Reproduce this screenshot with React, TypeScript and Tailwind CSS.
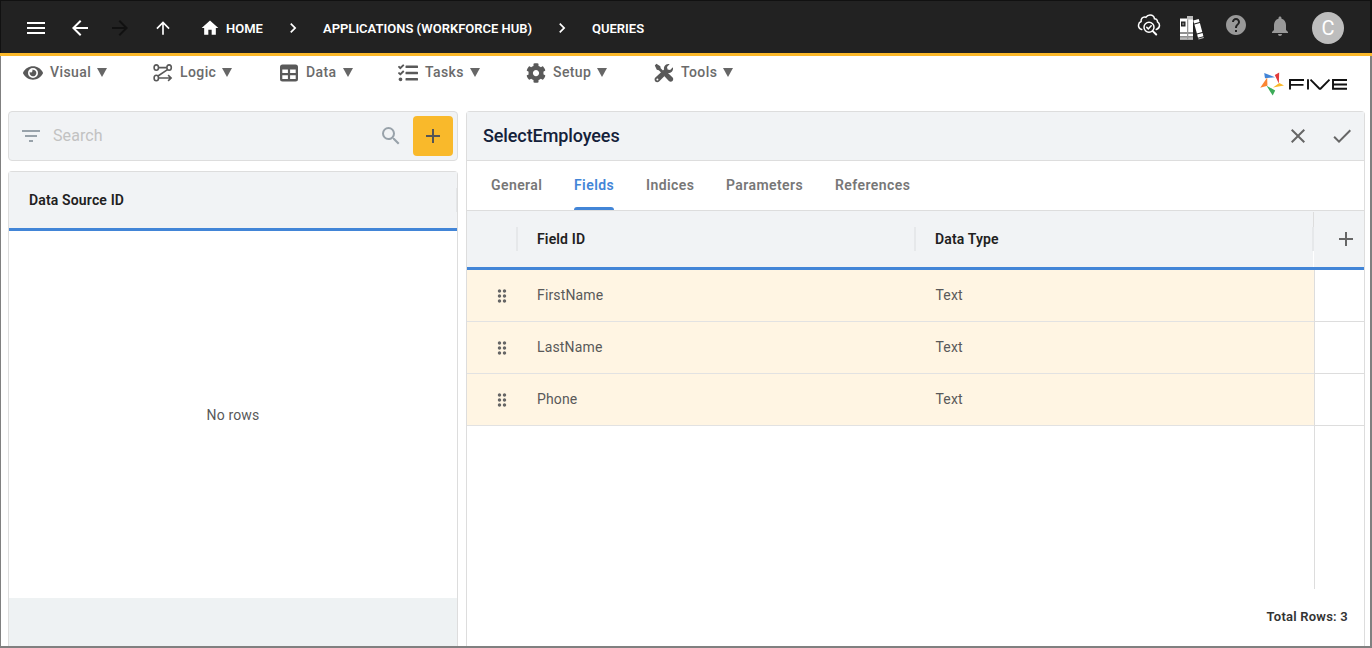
import type { ReactNode } from 'react'
import {
  MdAdd,
  MdArrowBack,
  MdArrowForward,
  MdArrowUpward,
  MdCheck,
  MdChevronRight,
  MdClose,
  MdDragIndicator,
  MdFilterList,
  MdHelp,
  MdHome,
  MdMenu,
  MdNotifications,
  MdSearch,
} from 'react-icons/md'
import { FaCog, FaEye, FaTasks } from 'react-icons/fa'

const fields = [
  { id: 'FirstName', type: 'Text' },
  { id: 'LastName', type: 'Text' },
  { id: 'Phone', type: 'Text' },
]

const tabs = [
  { label: 'General', width: 'w-[51px]' },
  { label: 'Fields', width: 'w-[40px]', active: true },
  { label: 'Indices', width: 'w-[48px]' },
  { label: 'Parameters', width: 'w-[77px]' },
  { label: 'References', width: 'w-[75px]' },
]

function LogicIcon() {
  return (
    <svg viewBox="0 0 20 20" className="h-5 w-5" fill="none" stroke="currentColor" strokeWidth="1.6">
      <ellipse cx="3.3" cy="4.6" rx="2.2" ry="2.7" />
      <ellipse cx="16.1" cy="4.6" rx="2.2" ry="2.7" />
      <ellipse cx="3.3" cy="15" rx="2.2" ry="2.7" />
      <path d="M5.5 4.6h8.400M14.500 6.700L5 13M5.500 15h12.500M15.100 12.100l3 2.900-3 2.900" />
    </svg>
  )
}

function TableIcon() {
  return (
    <svg viewBox="0 0 20 20" className="h-5 w-5" fill="currentColor">
      <path
        fillRule="evenodd"
        d="M3.500 1.500h13a2.500 2.500 0 0 1 2.500 2.500v12a2.500 2.500 0 0 1-2.500 2.500h-13A2.500 2.500 0 0 1 1 16V4a2.500 2.500 0 0 1 2.500-2.500zM3.300 6.400v3.700h5.600V6.400zM11.100 6.400v3.700h5.600V6.400zM3.300 12.300v3.700h5.600v-3.700zM11.100 12.300v3.700h5.600v-3.700z"
      />
    </svg>
  )
}

function ToolsIcon() {
  return (
    <svg viewBox="0 0 20 20" className="h-5 w-5" fill="currentColor">
      <path d="M.8 2.5L2.400.8l3.900 2.500.4 2 3 3-1.900 1.900-3-3-2-.4z" />
      <path d="M11.200 10.700l2-1.500 5.200 5.100c1 1 1.100 2.600.1 3.600s-2.600 1-3.600 0L10.200 13z" />
      <path
        fillRule="evenodd"
        d="M18.900 4.300l-2.800 2.700-2.500-.5-.6-2.500L15.700 1.100c-1.900-.6-4 0-5.100 1.800-.7 1.100-.9 2.300-.6 3.500L1.400 14.600c-1.100 1-1.100 2.700-.1 3.800s2.800 1.100 3.800 0l8.400-8.500c1.500.4 3.100-.1 4.300-1.200 1.200-1.200 1.500-2.900 1.100-4.400zM3.400 17.400a1 1 0 1 1 0-2 1 1 0 0 1 0 2z"
      />
    </svg>
  )
}

function CloudSearchIcon() {
  return (
    <svg viewBox="0 0 24 24" className="h-6 w-6" fill="none" stroke="currentColor" strokeWidth="1.5" strokeLinecap="round">
      <path d="M4.700 16.500C2.700 15.900 1.300 14.200 1.500 12c.2-1.700 1.100-2.900 2.600-3.500C3.800 5.900 5.400 4 7.600 4c.5 0 .9 0 1.400.2C9.900 2.700 11.200 1.900 13 1.900c2.500 0 4.200 1.500 4.500 3.900 2 0 3.100 1.400 3 3.100 1.400.8 2 2 2 3.400 0 2.100-1.200 3.600-3.200 4.200" />
      <circle cx="12" cy="14.300" r="5" />
      <path d="M9.800 14.400l1.500 1.500 2.900-3.200" />
      <path d="M15.800 18.100l3.400 3.400" strokeWidth="2" />
    </svg>
  )
}

function BooksIcon() {
  return (
    <svg viewBox="0 0 26 26" className="h-[26px] w-[26px]" fill="#fff">
      <path d="M1 4.500h7v14H1zM1 19.500h7v3H1zM1 23.500h7v2H1z" />
      <path d="M8 2h6v16.500H8zM8 19.500h6v3H8zM8 23.500h6v2H8z" />
      <path fill="#bbb" d="M8 2h6v3.500H8zM1 23.500h7v2H1zM8 23.500h6v2H8z" />
      <path fill="#999" d="M8 5.500h1.300v20H8z" />
      <path fill="#222" d="M2 7.500h4.500v5H2z" />
      <path fill="#777" d="M3.200 8.800h2v2.400h-2z" />
      <path d="M14.200 6.600l5.500-1.500.9 3-5.500 1.500zM15.400 10.500l5.500-1.500 2.400 9-5.400 1.500zM18.100 20.500l5.500-1.500.8 3.200-5.400 1.500z" />
      <path fill="#bbb" d="M19.200 24.500l5.400-1.500.3 1.100-5.400 1.500z" />
    </svg>
  )
}

function FiveLogo() {
  return (
    <svg viewBox="0 0 90 26" className="h-[26px] w-[90px]">
      <path fill="#4285d7" d="M5.200 2l10.800 4.200-10 1z" />
      <path fill="#e23b3b" d="M20.200 1.600l-.4 11-4-8.600z" />
      <path fill="#fb8530" d="M8.200 6.600l.2 8.200-7.200 2z" />
      <path fill="#fbb829" d="M20.300 12l4.700 2.400-11 2.200z" />
      <path fill="#3cab58" d="M7.600 14.800l8.600 4.600-2.500 5.200z" />
      <path
        fill="none"
        stroke="#111"
        strokeWidth="1.9"
        d="M45 9H31v9.500M31 13.900h13.500M49 8.200v10.300M51.500 8.600l9 9.100h1l9-9.100M88 9H74v8.700h14M74 13.500h14"
      />
    </svg>
  )
}

function MenuItem({ icon, label, className }: { icon: ReactNode; label: string; className: string }) {
  return (
    <div className={`flex h-8 items-center text-[#595959] ${className}`}>
      <span className="mt-0.5 flex w-[27px] shrink-0 items-center">{icon}</span>
      <span className="text-sm font-medium tracking-[0.4px] text-[#6b6b6b]">{label}</span>
      <svg viewBox="0 0 10 9" className="ml-1.5 h-[9px] w-[10px] shrink-0" fill="#666">
        <path d="M0 0h10L5 9z" />
      </svg>
    </div>
  )
}

function Header() {
  return (
    <header className="-mr-0.5 -ml-px flex h-14 shrink-0 items-center border-b-[3px] border-[#fbb829] bg-[#222] pr-7 pl-6 text-[13px] font-semibold text-white shadow-[inset_0_1px_0_#111,inset_1px_0_0_#111,inset_-2px_0_0_#111]">
      <MdMenu className="mt-0.5 h-6 w-6" />
      <MdArrowBack className="mt-0.5 ml-5 h-6 w-6" />
      <MdArrowForward className="mt-0.5 ml-4 h-6 w-6 text-[#111]" />
      <MdArrowUpward className="mt-0.5 ml-[21px] h-5 w-5" />
      <MdHome className="mt-0.5 ml-[27px] h-5 w-5" />
      <span className="mt-1 ml-1.5 w-[57px]">HOME</span>
      <MdChevronRight className="mt-0.5 h-5 w-5" />
      <span className="mt-1 ml-5 w-[229px]">APPLICATIONS (WORKFORCE HUB)</span>
      <MdChevronRight className="mt-0.5 h-5 w-5" />
      <span className="mt-1 ml-5">QUERIES</span>
      <div className="ml-auto flex items-center">
        <span className="-mt-[3px]">
          <CloudSearchIcon />
        </span>
        <span className="ml-[18px]">
          <BooksIcon />
        </span>
        <MdHelp className="-mt-[3px] ml-[19px] h-6 w-6 text-[#999]" />
        <MdNotifications className="-mt-0.5 ml-5 h-6 w-6 text-[#999]" />
        <span className="mt-[3px] ml-5 flex h-8 w-8 items-center justify-center rounded-full bg-[#bdbdbd] text-xl font-normal">C</span>
      </div>
    </header>
  )
}

function MenuBar() {
  return (
    <nav className="flex h-[55px] shrink-0 items-start pl-[22px]">
      <MenuItem className="w-[130px]" label="Visual" icon={<FaEye className="h-5 w-5" />} />
      <MenuItem className="w-[126px]" label="Logic" icon={<LogicIcon />} />
      <MenuItem className="w-[119px]" label="Data" icon={<TableIcon />} />
      <MenuItem className="w-[128px]" label="Tasks" icon={<FaTasks className="h-5 w-5" />} />
      <MenuItem className="w-[128px]" label="Setup" icon={<FaCog className="h-5 w-5" />} />
      <MenuItem className="w-[128px]" label="Tools" icon={<ToolsIcon />} />
      <div className="mt-[15px] mr-[21px] ml-auto">
        <FiveLogo />
      </div>
    </nav>
  )
}

function Sidebar() {
  return (
    <aside className="flex w-[450px] flex-col">
      <div className="flex h-[50px] shrink-0 items-center rounded border border-[#ddd] bg-[#f1f3f5] pr-1 pl-[10px]">
        <MdFilterList className="h-6 w-6 text-[#98a2aa]" />
        <span className="ml-[10px] text-base tracking-[0.1px] text-[#c2c2c2]">Search</span>
        <MdSearch className="mr-[10px] ml-auto h-6 w-6 text-[#98a2aa]" />
        <button className="flex h-10 w-10 items-center justify-center rounded bg-[#f9b92b] text-[#555]">
          <MdAdd className="h-6 w-6" />
        </button>
      </div>
      <div className="mt-[10px] flex flex-1 flex-col rounded-t border border-b-0 border-[#ddd]">
        <div className="flex h-[59px] shrink-0 items-center justify-between border-b-[3px] border-[#4285d7] bg-[#f1f3f5] pl-5 text-sm font-semibold tracking-[0.15px] text-[#212121]">
          Data Source ID
          <span className="h-6 w-px bg-[#e4e6e8]" />
        </div>
        <div className="flex flex-1 items-center justify-center text-sm tracking-[0.15px] text-[#595959]">No rows</div>
        <div className="h-12 shrink-0 bg-[#eef2f3]" />
      </div>
    </aside>
  )
}

function FieldsTable() {
  return (
    <div className="flex flex-1 flex-col">
      <div className="flex h-[59px] shrink-0 border-b-[3px] border-[#4285d7] bg-[#f1f3f5] text-sm font-semibold tracking-[0.15px] text-[#212121]">
        <div className="flex w-[51px] items-center justify-end">
          <span className="h-6 w-0.5 bg-[#e6e8ea]" />
        </div>
        <div className="flex w-[398px] items-center justify-between pl-[19px]">
          Field ID
          <span className="h-6 w-0.5 bg-[#e6e8ea]" />
        </div>
        <div className="flex w-[396px] items-center pl-[19px]">Data Type</div>
        <div className="flex w-0.5 flex-col items-end">
          <span className="mt-px h-[15px] w-px bg-[#ddd]" />
          <span className="h-6 w-0.5 bg-[#e6e8ea]" />
          <span className="w-px flex-1 bg-white" />
        </div>
        <div className="flex flex-1 items-center justify-end pr-[6px] text-[#666]">
          <MdAdd className="h-6 w-6" />
        </div>
      </div>
      <div className="flex h-[319px] shrink-0 flex-col">
        {fields.map((field) => (
          <div key={field.id} className="flex h-[52px] text-sm tracking-[0.15px] text-[#595959]">
            <div className="flex w-[847px] items-center border-b border-[#e2e2e2] bg-[#fff5e3]">
              <MdDragIndicator className="mt-px ml-[25px] h-5 w-5 text-[#666]" />
              <span className="-mt-px ml-[25px] w-[398.5px]">{field.id}</span>
              <span className="-mt-px">{field.type}</span>
            </div>
            <div className="flex-1 border-b border-l border-[#ddd]" />
          </div>
        ))}
        <div className="ml-[847px] flex-1 border-l border-[#ddd]" />
      </div>
      <div className="mt-[18px] pr-4 text-right text-[13px] font-semibold tracking-[0.23px] text-[#333]">Total Rows: 3</div>
    </div>
  )
}

function QueryPanel() {
  return (
    <section className="ml-2 flex w-[899px] flex-col rounded-t border border-b-0 border-[#ddd]">
      <div className="flex h-[49px] shrink-0 items-center border-b border-[#ddd] bg-[#f1f3f5] pr-[10px] pl-4">
        <h1 className="text-lg font-medium tracking-[-0.1px] text-[#14213a]">SelectEmployees</h1>
        <MdClose className="ml-auto h-6 w-6 text-[#666]" />
        <MdCheck className="ml-5 h-6 w-6 text-[#666]" />
      </div>
      <div className="flex h-[50px] shrink-0 gap-8 border-b border-[#ddd] pl-6 text-sm font-semibold tracking-[0.42px] text-[#777]">
        {tabs.map((tab) => (
          <div
            key={tab.label}
            className={`relative flex items-center pb-0.5 whitespace-nowrap ${tab.width} ${tab.active ? 'text-[#4285d7]' : ''}`}
          >
            {tab.label}
            {tab.active && <span className="absolute bottom-0 left-0 h-[3px] w-full rounded-t bg-[#4285d7]" />}
          </div>
        ))}
      </div>
      <FieldsTable />
    </section>
  )
}

export default function App() {
  return (
    <div className="flex h-[648px] w-[1372px] flex-col border-r-2 border-b-2 border-l border-[#808080] bg-white font-[Roboto,sans-serif]">
      <Header />
      <MenuBar />
      <main className="flex flex-1 pl-[7px]">
        <Sidebar />
        <QueryPanel />
      </main>
    </div>
  )
}
